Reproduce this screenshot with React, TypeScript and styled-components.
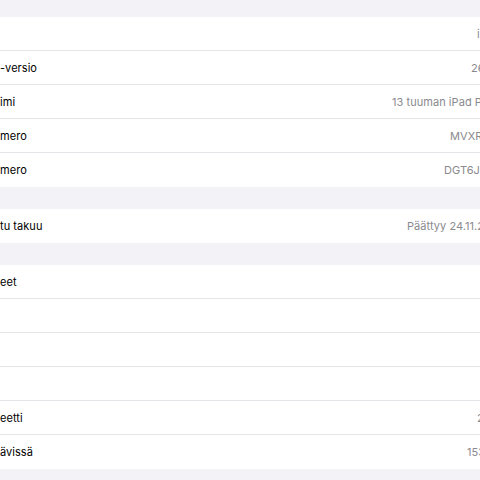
import React from "react";
import styled, { createGlobalStyle } from "styled-components";

const Global = createGlobalStyle`
  html, body { margin: 0; padding: 0; background: #f2f2f7; }
  body { font-family: Inter, "Noto Sans", "Liberation Sans", sans-serif; -webkit-font-smoothing: antialiased; }
`;

const Page = styled.div`
  width: 480px;
  height: 480px;
  overflow: hidden;
  background: #f2f2f7;
  padding-top: 17px;
  box-sizing: border-box;
  display: flex;
  flex-direction: column;
  gap: 22px;
`;

const Group = styled.div`
  background: #ffffff;
  display: flex;
  flex-direction: column;
`;

const Row = styled.div<{ $split: number }>`
  height: 34px;
  box-sizing: border-box;
  display: grid;
  grid-template-columns: ${(p) => p.$split}px 1fr;
  align-items: center;
  border-bottom: 1px solid #e4e4e9;
  font-size: 11px;
  letter-spacing: 0.05px;
  &:last-child { border-bottom: none; }
`;

const Label = styled.span`
  color: #000000;
  white-space: nowrap;
  overflow: hidden;
`;

const Value = styled.span`
  color: #8a8a8e;
  white-space: nowrap;
  overflow: hidden;
`;

type Item = { label: string; value: string; x: number };

const groups: Item[][] = [
  [
    { label: "", value: "iPad", x: 477 },
    { label: "-versio", value: "26.0.1", x: 471 },
    { label: "imi", value: "13 tuuman iPad Pro (M4)", x: 392 },
    { label: "mero", value: "MVXR3KN/A", x: 450 },
    { label: "mero", value: "DGT6JKL9QX", x: 444 },
  ],
  [{ label: "tu takuu", value: "Päättyy 24.11.2025", x: 407 }],
  [
    { label: "eet", value: "0", x: 480 },
    { label: "", value: "0", x: 480 },
    { label: "", value: "0", x: 480 },
    { label: "", value: "0", x: 480 },
    { label: "eetti", value: "256 Gt", x: 477 },
    { label: "ävissä", value: "153,2 Gt", x: 467 },
  ],
];

export default function App() {
  return (
    <>
      <Global />
      <Page>
        {groups.map((g, gi) => (
          <Group key={gi}>
            {g.map((it, i) => (
              <Row key={i} $split={it.x}>
                <Label>{it.label}</Label>
                <Value>{it.value}</Value>
              </Row>
            ))}
          </Group>
        ))}
      </Page>
    </>
  );
}
